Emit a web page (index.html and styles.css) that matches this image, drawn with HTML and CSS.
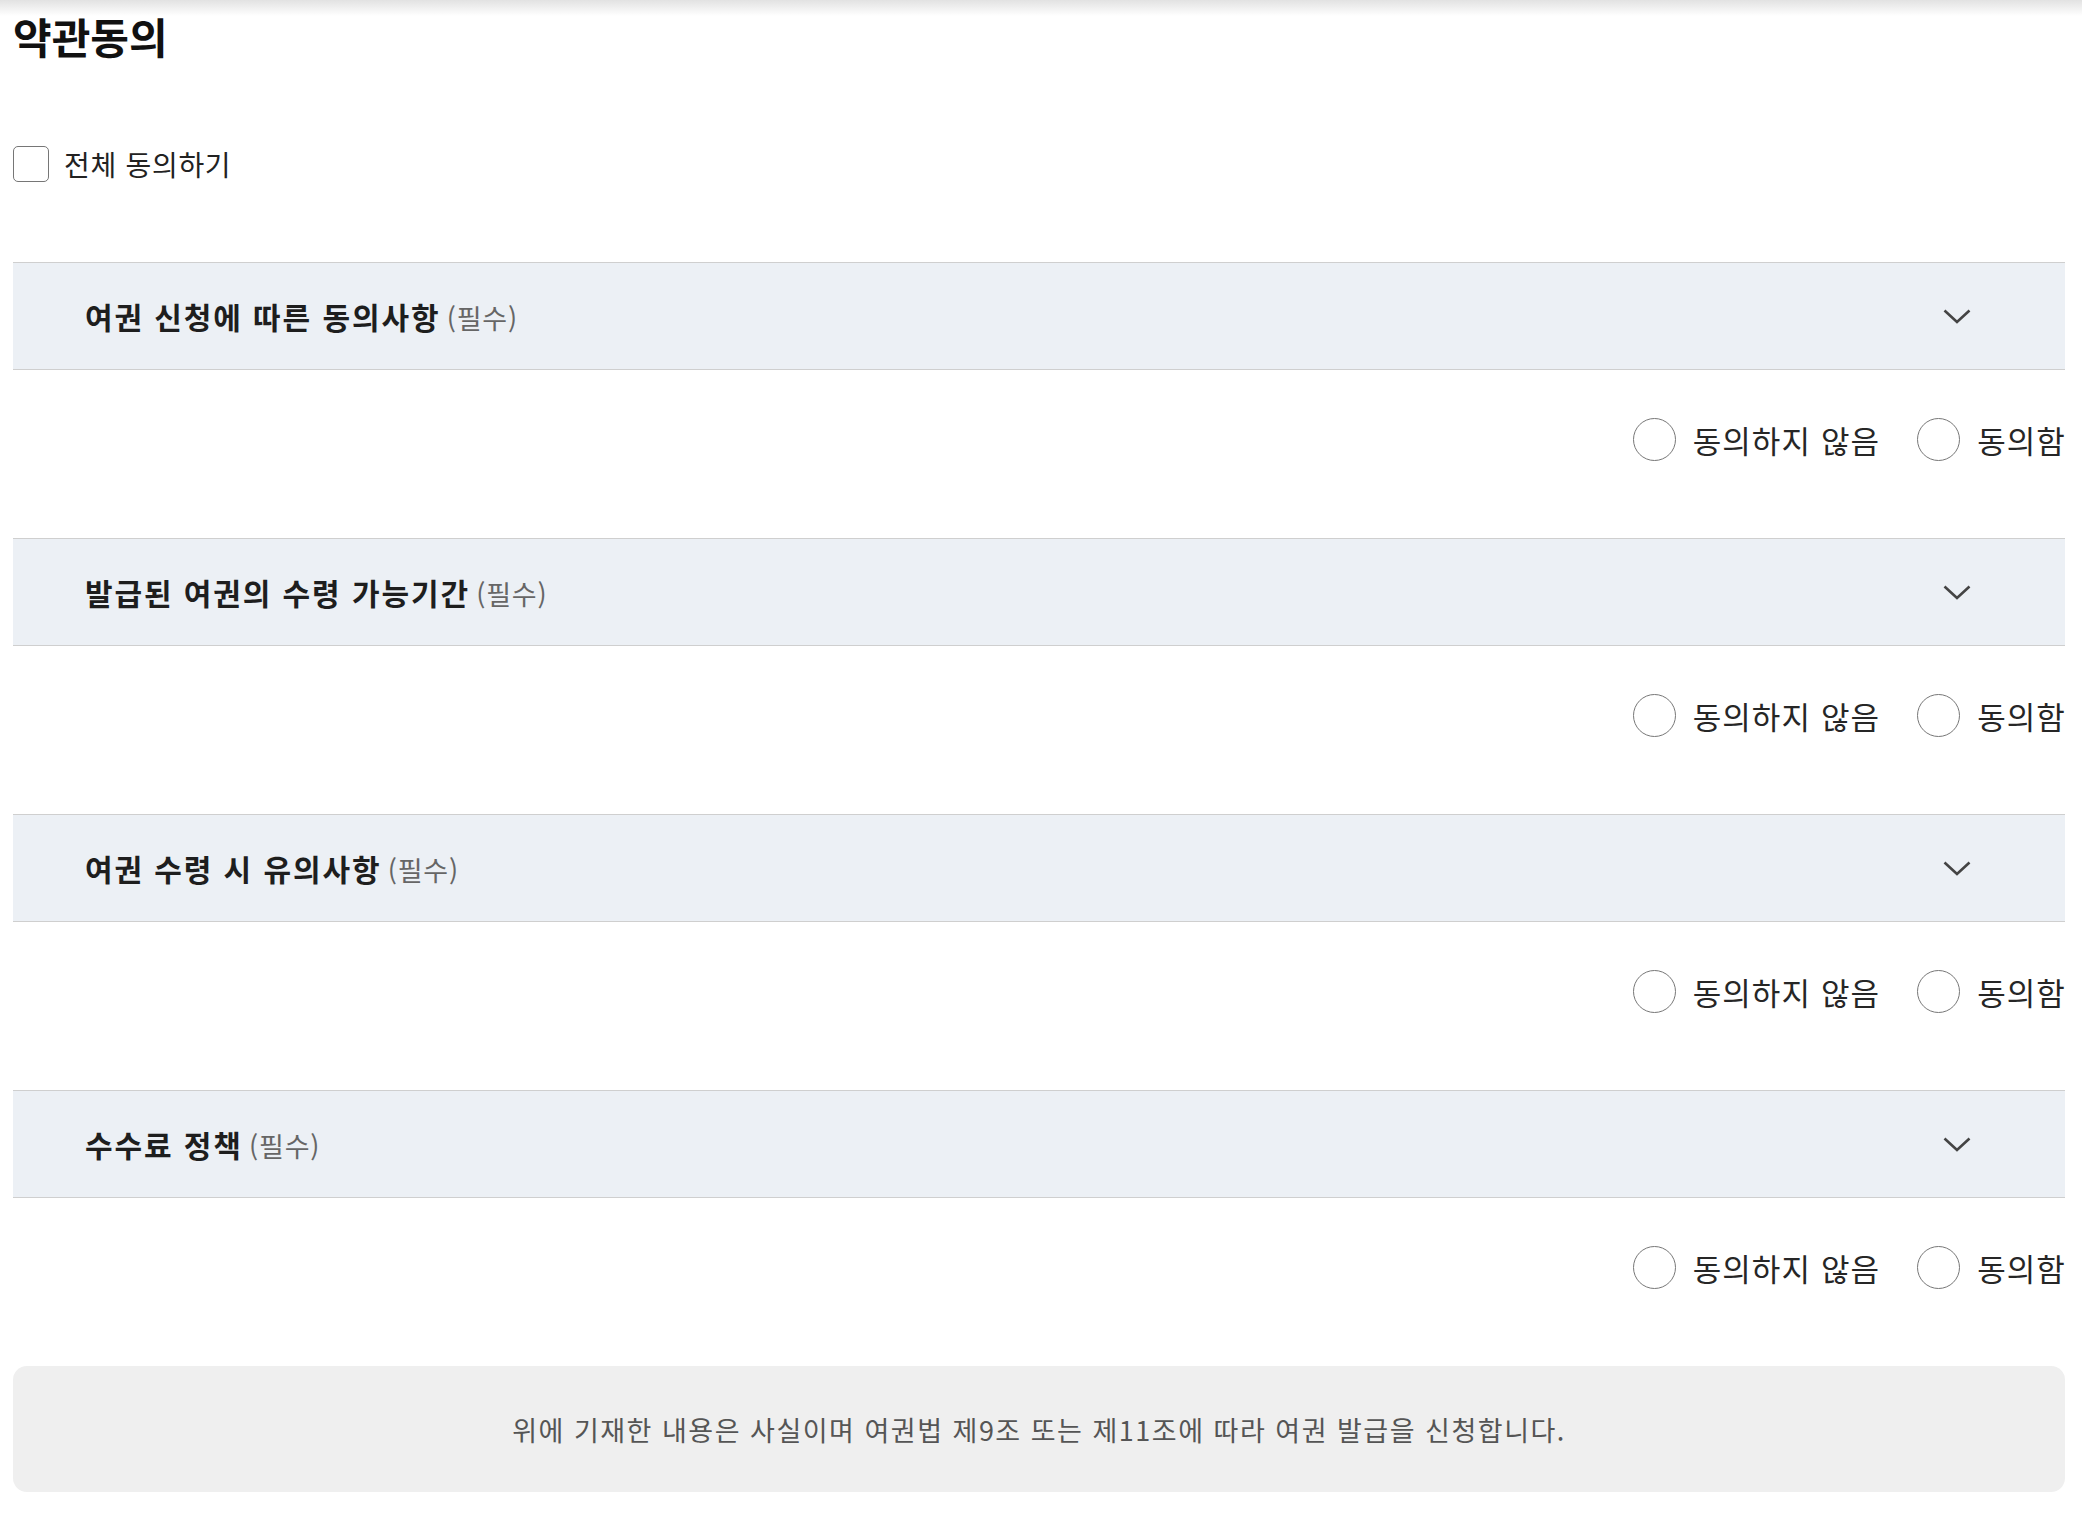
FILE: index.html
```html
<!DOCTYPE html>
<html lang="ko">
<head>
    <meta charset="UTF-8" />
    <meta name="viewport" content="width=device-width, initial-scale=1.0" />
    <title>약관동의</title>
    <link rel="stylesheet" href="styles.css">
</head>
<body>
    <div class="top-shadow"></div>
    <main class="terms">
        <h1 class="terms-title">약관동의</h1>

        <label class="agree-all">
            <span class="check-box"></span>
            <span>전체 동의하기</span>
        </label>

        <section class="term">
            <div class="term-head">
                <p class="term-name">여권 신청에 따른 동의사항 <span class="required">(필수)</span></p>
                <svg class="chevron" width="28" height="15" viewBox="0 0 28 15"><polyline points="1.5,1.5 14,13 26.5,1.5" fill="none" stroke="#444" stroke-width="2.6" /></svg>
            </div>
            <div class="term-choice">
                <label class="radio"><span class="radio-circle"></span>동의하지 않음</label>
                <label class="radio"><span class="radio-circle"></span>동의함</label>
            </div>
        </section>

        <section class="term">
            <div class="term-head">
                <p class="term-name">발급된 여권의 수령 가능기간 <span class="required">(필수)</span></p>
                <svg class="chevron" width="28" height="15" viewBox="0 0 28 15"><polyline points="1.5,1.5 14,13 26.5,1.5" fill="none" stroke="#444" stroke-width="2.6" /></svg>
            </div>
            <div class="term-choice">
                <label class="radio"><span class="radio-circle"></span>동의하지 않음</label>
                <label class="radio"><span class="radio-circle"></span>동의함</label>
            </div>
        </section>

        <section class="term">
            <div class="term-head">
                <p class="term-name">여권 수령 시 유의사항 <span class="required">(필수)</span></p>
                <svg class="chevron" width="28" height="15" viewBox="0 0 28 15"><polyline points="1.5,1.5 14,13 26.5,1.5" fill="none" stroke="#444" stroke-width="2.6" /></svg>
            </div>
            <div class="term-choice">
                <label class="radio"><span class="radio-circle"></span>동의하지 않음</label>
                <label class="radio"><span class="radio-circle"></span>동의함</label>
            </div>
        </section>

        <section class="term">
            <div class="term-head">
                <p class="term-name">수수료 정책 <span class="required">(필수)</span></p>
                <svg class="chevron" width="28" height="15" viewBox="0 0 28 15"><polyline points="1.5,1.5 14,13 26.5,1.5" fill="none" stroke="#444" stroke-width="2.6" /></svg>
            </div>
            <div class="term-choice">
                <label class="radio"><span class="radio-circle"></span>동의하지 않음</label>
                <label class="radio"><span class="radio-circle"></span>동의함</label>
            </div>
        </section>

        <div class="notice">
            <p>위에 기재한 내용은 사실이며 여권법 제9조 또는 제11조에 따라 여권 발급을 신청합니다.</p>
        </div>
    </main>
</body>
</html>
```

FILE: styles.css
```css
body {
    font-family: "Noto Sans CJK KR", "Noto Sans", sans-serif;
    margin: 0;
    background-color: #ffffff;
    color: #222;
}

/* тень от шапки сверху */
.top-shadow {
    height: 16px;
    background: linear-gradient(#e2e2e2, #ffffff);
}

.terms {
    padding: 0 17px 0 13px;
}

.terms-title {
    margin: -4px 0 0;
    font-size: 42px;
    line-height: 48px;
    font-weight: 700;
    color: #111;
}

.agree-all {
    display: flex;
    align-items: center;
    gap: 15px;
    margin-top: 86px;
    height: 36px;
    font-size: 28px;
    color: #222;
    letter-spacing: 0.7px;
}

.check-box {
    width: 34px;
    height: 34px;
    border: 1px solid #767676;
    border-radius: 5px;
    background-color: #fff;
}

.term:first-of-type {
    margin-top: 80px;
}

.term-head {
    display: flex;
    justify-content: space-between;
    align-items: center;
    height: 106px;
    padding: 0 94px 0 72px;
    background-color: #ecf0f5;
    border-top: 1px solid #cfcfcf;
    border-bottom: 1px solid #cfcfcf;
}

.term-name {
    margin: 0;
    font-size: 30px;
    font-weight: 700;
    color: #1e1e1e;
    letter-spacing: 1.9px;
}

.required {
    margin-left: -4px;
    font-size: 27px;
    font-weight: 400;
    color: #666;
    letter-spacing: 0.8px;
}

.term-choice {
    display: flex;
    justify-content: flex-end;
    gap: 38px;
    padding: 48px 0 77px;
}

.radio {
    display: flex;
    align-items: center;
    gap: 17px;
    height: 43px;
    font-size: 31px;
    color: #262626;
    letter-spacing: 1.1px;
    margin-right: -1px;
}

.radio-circle {
    width: 41px;
    height: 41px;
    border: 1px solid #777;
    border-radius: 50%;
}

.notice {
    display: flex;
    justify-content: center;
    align-items: center;
    height: 126px;
    background-color: #efefef;
    border-radius: 14px;
}

.notice p {
    margin: 0;
    font-size: 27px;
    color: #555;
    letter-spacing: 1.5px;
}
```
